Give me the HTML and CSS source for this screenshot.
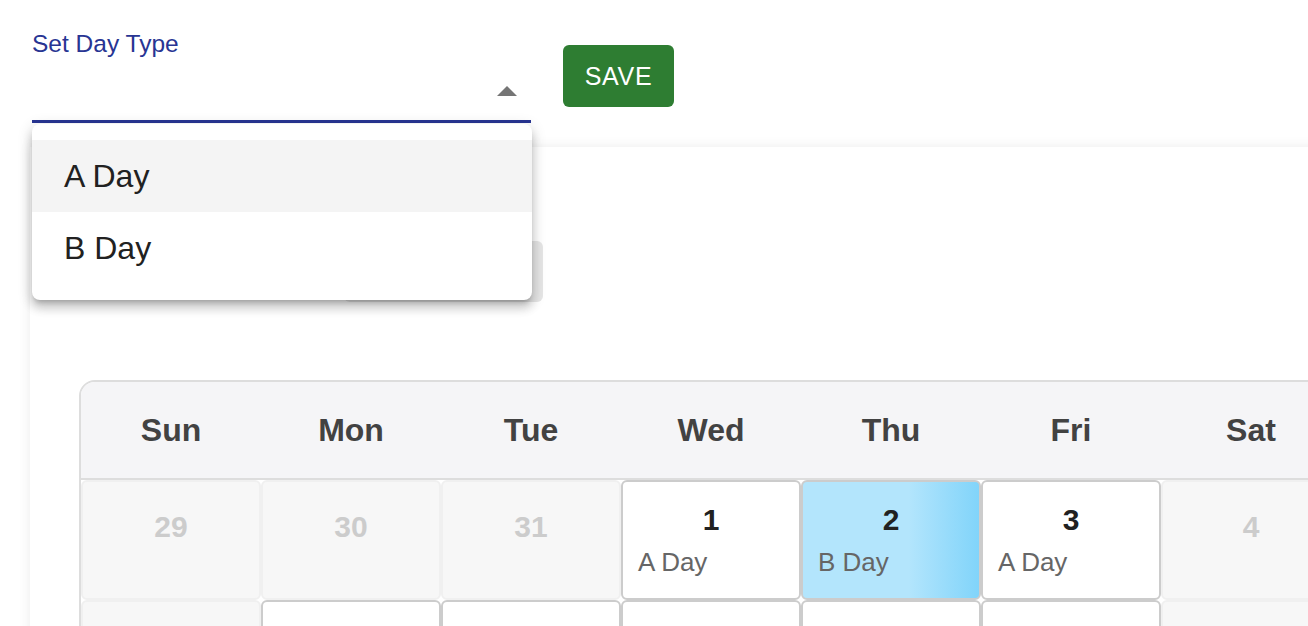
FILE: index.html
```html
<!DOCTYPE html>
<html lang="en">

<head>
  <meta charset="UTF-8">
  <meta name="viewport" content="width=device-width, initial-scale=1.0">
  <title>School Calendar</title>
  <link rel="stylesheet" href="styles.css">
</head>

<body>
  <div class="toolbar">
    <div class="field">
      <label class="field-label">Set Day Type</label>
      <div class="select">
        <span class="arrow"></span>
      </div>
      <ul class="menu">
        <li class="menu-item selected">A Day</li>
        <li class="menu-item">B Day</li>
      </ul>
    </div>
    <button class="btn-save">SAVE</button>
  </div>

  <div class="paper">
    <div class="cal-head">
      <button class="btn-today">Today</button>
    </div>

    <div class="calendar">
      <div class="dow">Sun</div>
      <div class="dow">Mon</div>
      <div class="dow">Tue</div>
      <div class="dow">Wed</div>
      <div class="dow">Thu</div>
      <div class="dow">Fri</div>
      <div class="dow">Sat</div>

      <!-- week 1 -->
      <div class="day off"><span class="num">29</span></div>
      <div class="day off"><span class="num">30</span></div>
      <div class="day off"><span class="num">31</span></div>
      <div class="day"><span class="num">1</span><span class="type">A Day</span></div>
      <div class="day b-day"><span class="num">2</span><span class="type">B Day</span></div>
      <div class="day"><span class="num">3</span><span class="type">A Day</span></div>
      <div class="day off"><span class="num">4</span></div>

      <!-- week 2 -->
      <div class="day off"><span class="num">5</span></div>
      <div class="day"><span class="num">6</span><span class="type">B Day</span></div>
      <div class="day"><span class="num">7</span><span class="type">A Day</span></div>
      <div class="day"><span class="num">8</span><span class="type">B Day</span></div>
      <div class="day"><span class="num">9</span><span class="type">A Day</span></div>
      <div class="day"><span class="num">10</span><span class="type">B Day</span></div>
      <div class="day off"><span class="num">11</span></div>
    </div>
  </div>
</body>

</html>
```

FILE: styles.css
```css
html,
body {
  overflow: hidden;
}

body {
  font-family: 'Liberation Sans', Arial, sans-serif;
  margin: 0;
  padding: 0;
  background: #fff;
  color: #212121;
}

.toolbar {
  display: flex;
  align-items: flex-start;
  gap: 32px;
  padding: 30px 0 0 32px;
  height: 93px;
  position: relative;
  z-index: 2;
}

.field {
  width: 499px;
  position: relative;
}

.field-label {
  display: block;
  font-size: 24.5px;
  line-height: 28px;
  color: #283593;
}

.select {
  height: 62px;
  border-bottom: 3px solid #283593;
  position: relative;
}

.arrow {
  position: absolute;
  right: 14px;
  top: 28px;
  width: 0;
  height: 0;
  border-left: 10px solid transparent;
  border-right: 10px solid transparent;
  border-bottom: 10px solid #757575;
}

.menu {
  position: absolute;
  left: 0;
  top: 94px;
  width: 500px;
  margin: 0;
  padding: 16px 0;
  list-style: none;
  background: #fff;
  border-radius: 8px;
  box-shadow: 0 5px 5px -3px rgba(0, 0, 0, 0.2), 0 8px 10px 1px rgba(0, 0, 0, 0.14), 0 3px 14px 2px rgba(0, 0, 0, 0.12);
}

.menu-item {
  height: 72px;
  padding: 0 32px;
  display: flex;
  align-items: center;
  font-size: 32px;
  color: #212121;
}

.menu-item.selected {
  background: #f4f4f4;
}

.btn-save {
  margin-top: 15px;
  width: 111px;
  height: 62px;
  border: none;
  border-radius: 6px;
  background: #2e7d32;
  color: #fff;
  font-family: inherit;
  font-size: 25px;
  letter-spacing: 0.7px;
  cursor: pointer;
}

.paper {
  margin: 24px 0 0 30px;
  width: 1400px;
  padding-left: 49px;
  background: #fff;
  box-shadow: 0 0 12px rgba(0, 0, 0, 0.08);
  position: relative;
  z-index: 1;
}

.cal-head {
  padding: 94px 0 0 265px;
  height: 61px;
}

.btn-today {
  width: 199px;
  height: 61px;
  border: none;
  border-radius: 6px;
  background: #e6e6e6;
  color: #e6e6e6;
  font-family: inherit;
  font-size: 22px;
}

.calendar {
  margin-top: 78px;
  display: grid;
  grid-template-columns: repeat(7, 180px);
  width: max-content;
  border: 2px solid #ddd;
  border-radius: 16px;
  overflow: hidden;
  background: #fff;
}

.dow {
  height: 96px;
  display: flex;
  align-items: center;
  justify-content: center;
  background: #f5f5f7;
  border-bottom: 2px solid #ddd;
  font-size: 32px;
  font-weight: bold;
  color: #424242;
}

.day {
  height: 120px;
  box-sizing: border-box;
  border: 2px solid #ccc;
  border-radius: 6px;
  padding: 21px 15px 0;
  display: flex;
  flex-direction: column;
  background: #fff;
}

.day .num {
  text-align: center;
  font-size: 30px;
  line-height: 34px;
  font-weight: bold;
  color: #212121;
}

.day .type {
  margin-top: 10px;
  font-size: 26px;
  line-height: 30px;
  color: #666;
}

.day.off {
  background: #f7f7f7;
  border-color: #f0f0f0;
}

.day.off .num {
  margin-top: 7px;
  color: #ccc;
}

.day.b-day {
  background: linear-gradient(to right, #b3e5fc 60%, #81d4fa);
}
```
